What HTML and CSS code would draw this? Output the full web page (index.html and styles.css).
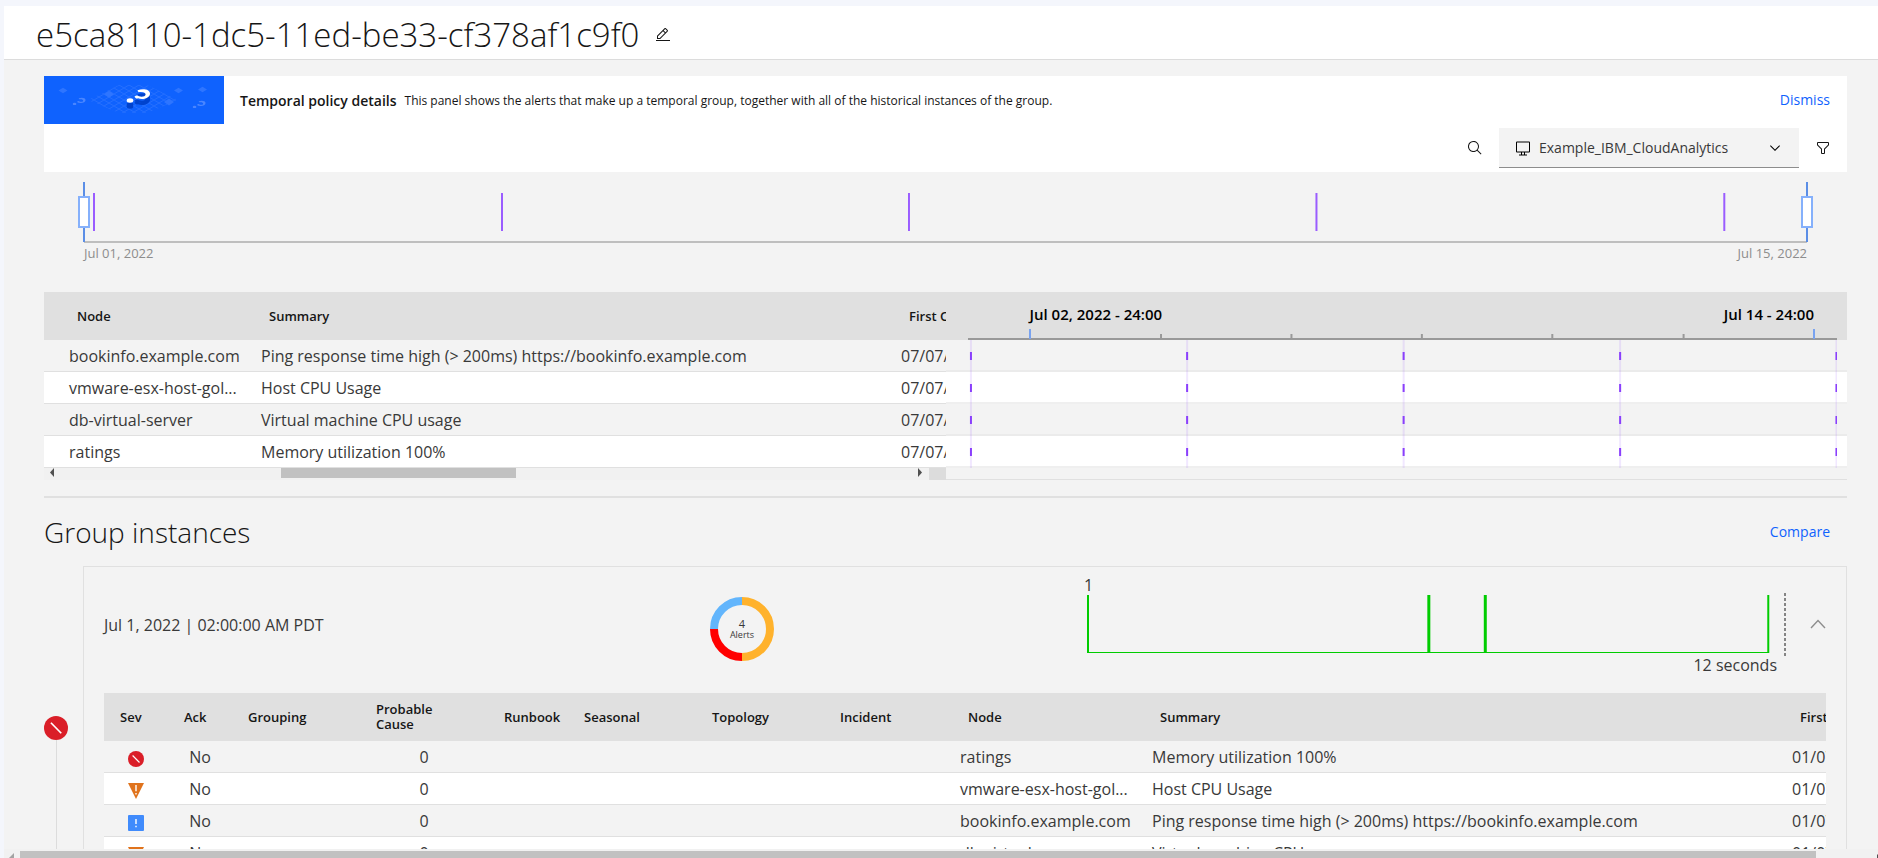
FILE: index.html
```html
<!DOCTYPE html>
<html lang="en">
<head>
<meta charset="utf-8">
<title>Temporal policy details</title>
<link rel="stylesheet" href="styles.css">
</head>
<body>
<svg class="defs" width="0" height="0" aria-hidden="true">
  <symbol id="critical" viewBox="0 0 16 16"><circle cx="8" cy="8" r="8" fill="#da1e28"/><path d="M4.2 4.9l.8-.8 6.9 7-.8.8z" fill="#fff"/></symbol>
  <symbol id="major" viewBox="0 0 16 16"><path d="M0 0h16L8 16z" fill="#e0731c"/><path d="M7.3 2h1.4v6.2H7.3zM7.3 10h1.4v1.5H7.3z" fill="#fff"/></symbol>
  <symbol id="minor" viewBox="0 0 16 16"><rect width="16" height="16" rx="1" fill="#408bfc"/><path d="M7.3 4h1.4v5H7.3zM7.3 10.8h1.4v1.5H7.3z" fill="#fff"/></symbol>
  <symbol id="question" viewBox="0 0 26 20" overflow="visible"><ellipse cx="4" cy="12.5" rx="3.3" ry="2.2"/><path d="M8.5 8.6c1.8-1.6 3.2-1.3 4.5-.3 2.2.9 6.3.6 6.6-1.7C19.800 4.200 16 3.300 12.500 4.300l-1-2C17 .200 23.800 1.300 24 5.500c.2 4.700-7.500 6.700-12 4.800-1 .6-2.500.4-3.500-1.700z"/></symbol>
</svg>

<header class="titlebar">
  <h1>e5ca8110-1dc5-11ed-be33-cf378af1c9f0</h1>
  <button class="icon-button" aria-label="Edit name"><svg width="16" height="16" viewBox="0 0 32 32"><path d="M2 26h28v2H2zM25.400 9c.8-.8.8-2 0-2.800l-3.600-3.600c-.8-.8-2-.8-2.800 0l-15 15V24h6.400l15-15zm-5-5L24 7.600l-3 3L17.400 7l3-3zM6 22v-3.600l10-10 3.600 3.600-10 10H6z"/></svg></button>
</header>

<main class="content">
  <section class="panel">
    <div class="intro">
      <svg class="banner" width="180" height="48" viewBox="0 0 180 48" aria-hidden="true">
        <defs>
          <pattern id="mesh" width="10" height="6" patternUnits="userSpaceOnUse"><path d="M0 0l10 6M10 0L0 6" stroke="#4a86ff" stroke-width=".6" fill="none"/></pattern>
        </defs>
        <rect width="180" height="48" fill="#0f62fe"/>
        <path d="M44 24L75 9h28l31 15-31 13H75z" fill="url(#mesh)" opacity=".6"/>
        <g fill="#2e75ff"><path d="M14.500 14.500l4.500-2.700 4.500 2.700-4.500 2.700zM60 18.300l5-3.500 5 3.500-5 3.500zM130 14.500l4.500-2.700 4.500 2.700-4.500 2.700zM154 13.500l4.500-2.700 4.500 2.700-4.500 2.700zM120 26l5-3.500 5 3.500-5 3.500z"/></g>
        <g fill="#4a86ff"><use href="#question" x="28" y="21" width="15" height="11"/><use href="#question" x="148" y="24" width="15" height="11"/></g>
        <use href="#question" x="82" y="18" width="26" height="20" fill="#0043ce"/>
        <use href="#question" x="82" y="16" width="26" height="20" fill="#0043ce"/>
        <use href="#question" x="82" y="12" width="26" height="20" fill="#fff"/>
      </svg>
      <h2>Temporal policy details</h2>
      <p>This panel shows the alerts that make up a temporal group, together with all of the historical instances of the group.</p>
      <button class="link">Dismiss</button>
    </div>
    <div class="toolbar">
      <button class="icon-button" aria-label="Search"><svg width="16" height="16" viewBox="0 0 32 32"><path d="M29 27.600l-7.600-7.600a11 11 0 1 0-1.400 1.400l7.600 7.600zM4 13a9 9 0 1 1 9 9 9 9 0 0 1-9-9z"/></svg></button>
      <label class="picker">
        <svg width="16" height="16" viewBox="0 0 32 32" aria-hidden="true"><path d="M28 3H4a2 2 0 0 0-2 2v18a2 2 0 0 0 2 2h8v4H8v2h16v-2h-4v-4h8a2 2 0 0 0 2-2V5a2 2 0 0 0-2-2zM18 29h-4v-4h4zm10-6H4V5h24z"/></svg>
        <select aria-label="View"><option>Example_IBM_CloudAnalytics</option></select>
        <svg width="16" height="16" viewBox="0 0 16 16" aria-hidden="true"><path d="M8 11L3 6l.7-.7L8 9.600l4.300-4.300.7.7z"/></svg>
      </label>
      <button class="icon-button" aria-label="Filter"><svg width="16" height="16" viewBox="0 0 32 32"><path d="M18 28h-4a2 2 0 0 1-2-2v-7.600L4.600 11A2 2 0 0 1 4 9.600V6a2 2 0 0 1 2-2h20a2 2 0 0 1 2 2v3.600a2 2 0 0 1-.6 1.400L20 18.400V26a2 2 0 0 1-2 2zM6 6v3.600l8 8V26h4v-8.400l8-8V6z"/></svg></button>
    </div>
  </section>

  <section class="overview">
    <svg width="100%" height="61" aria-label="Group occurrences">
      <rect y="59" width="100%" height="2" fill="#bebebe"/>
      <g stroke="#9a5cff" stroke-width="2">
        <line x1="0.58%" x2="0.58%" y1="11" y2="49"/><line x1="24.260%" x2="24.260%" y1="11" y2="49"/><line x1="47.880%" x2="47.880%" y1="11" y2="49"/><line x1="71.530%" x2="71.530%" y1="11" y2="49"/><line x1="95.200%" x2="95.200%" y1="11" y2="49"/>
      </g>
      <g stroke="#5b8ee6" stroke-width="2"><line x1="0" x2="0" y1="0" y2="60"/><line x1="100%" x2="100%" y1="0" y2="60"/></g>
      <g fill="#fff" stroke="#85b0fb" stroke-width="2">
        <rect x="-5" y="15" width="10" height="30"/>
        <svg x="100%" overflow="visible"><rect x="-5" y="15" width="10" height="30"/></svg>
      </g>
    </svg>
    <div class="range"><span>Jul 01, 2022</span><span>Jul 15, 2022</span></div>
  </section>

  <section class="details">
    <div class="alerts">
      <table class="grid">
        <colgroup><col class="w-edge"><col class="w-node"><col class="w-summary"><col class="w-date"></colgroup>
        <thead><tr><th></th><th>Node</th><th>Summary</th><th>First Occurrence</th></tr></thead>
        <tbody>
          <tr><td></td><td>bookinfo.example.com</td><td>Ping response time high (&gt; 200ms) https://bookinfo.example.com</td><td>07/07/2022</td></tr>
          <tr><td></td><td>vmware-esx-host-gol...</td><td>Host CPU Usage</td><td>07/07/2022</td></tr>
          <tr><td></td><td>db-virtual-server</td><td>Virtual machine CPU usage</td><td>07/07/2022</td></tr>
          <tr><td></td><td>ratings</td><td>Memory utilization 100%</td><td>07/07/2022</td></tr>
        </tbody>
      </table>
      <div class="scroll-x">
        <svg width="12" height="12"><path d="M10 0v9L6 4.500z" fill="#505050"/></svg>
        <div class="track"><div class="thumb"></div></div>
        <svg width="12" height="12"><path d="M3 0v9l4-4.500z" fill="#505050"/></svg>
        <div class="corner"></div>
      </div>
    </div>
    <div class="lanes">
      <div class="lanes-head">
        <div class="lane-labels"><span>Jul 02, 2022 - 24:00</span><span>Jul 14 - 24:00</span></div>
        <svg width="100%" height="12">
          <rect y="10" width="100%" height="2" fill="#999"/>
          <g stroke="#999" stroke-width="2"><line x1="22.200%" x2="22.200%" y1="6" y2="11"/><line x1="37.200%" x2="37.200%" y1="6" y2="11"/><line x1="52.200%" x2="52.200%" y1="6" y2="11"/><line x1="67.200%" x2="67.200%" y1="6" y2="11"/><line x1="82.300%" x2="82.300%" y1="6" y2="11"/></g>
          <g stroke="#79a3f0" stroke-width="2"><line x1="7.130%" x2="7.130%" y1="1" y2="11"/><line x1="97.300%" x2="97.300%" y1="1" y2="11"/></g>
        </svg>
      </div>
      <div class="lanes-body">
        <svg width="100%" height="128">
          <g stroke="#8a3ffc" stroke-width="2" stroke-opacity=".12"><line x1="0.340%" x2="0.340%" y1="0" y2="128"/><line x1="25.200%" x2="25.200%" y1="0" y2="128"/><line x1="50.100%" x2="50.100%" y1="0" y2="128"/><line x1="75%" x2="75%" y1="0" y2="128"/><line x1="99.880%" x2="99.880%" y1="0" y2="128"/></g>
          <g stroke="#8a3ffc" stroke-width="2" stroke-dasharray="8 24"><line x1="0.340%" x2="0.340%" y1="12" y2="128"/><line x1="25.200%" x2="25.200%" y1="12" y2="128"/><line x1="50.100%" x2="50.100%" y1="12" y2="128"/><line x1="75%" x2="75%" y1="12" y2="128"/><line x1="99.880%" x2="99.880%" y1="12" y2="128"/></g>
        </svg>
      </div>
    </div>
  </section>

  <section class="instances">
    <div class="instances-head"><h2>Group instances</h2><button class="link">Compare</button></div>
    <div class="instance">
      <div class="rail"><svg width="24" height="24"><use href="#critical"/></svg></div>
      <article class="card">
        <div class="card-head">
          <span>Jul 1, 2022 | 02:00:00 AM PDT</span>
          <div class="donut">
            <svg width="64" height="64" viewBox="0 0 64 64" fill="none" stroke-width="8" aria-hidden="true">
              <path d="M32 4a28 28 0 0 1 0 56" stroke="#ffb22c"/><path d="M32 60A28 28 0 0 1 4 32" stroke="#f00"/><path d="M4 32A28 28 0 0 1 32 4" stroke="#62b5fc"/>
            </svg>
            <div class="donut-label"><b>4</b><span>Alerts</span></div>
          </div>
          <div class="spark">
            <span>1</span>
            <svg width="100%" height="64" aria-label="Alert timing">
              <rect y="59" width="97.700%" height="1" fill="#0c0"/>
              <g stroke="#0c0"><line x1="0" x2="0" y1="2" y2="60" stroke-width="2"/><line x1="48.900%" x2="48.900%" y1="2" y2="60" stroke-width="3"/><line x1="57%" x2="57%" y1="2" y2="60" stroke-width="3"/><line x1="97.600%" x2="97.600%" y1="2" y2="60" stroke-width="2"/></g>
              <line x1="100%" x2="100%" y1="0" y2="64" stroke="#161616" stroke-dasharray="3 2"/>
            </svg>
            <span class="duration">12 seconds</span>
          </div>
          <button class="icon-button" aria-label="Collapse"><svg width="16" height="16" viewBox="0 0 16 16"><path d="M1 11l7-7.500 7 7.500" fill="none" stroke="#8d8d8d" stroke-width="1.400"/></svg></button>
        </div>
        <div class="alerts">
          <table class="grid">
            <colgroup><col class="w-64"><col class="w-64"><col class="w-128"><col class="w-128"><col class="w-80"><col class="w-128"><col class="w-128"><col class="w-128"><col class="w-node"><col class="w-summary"><col class="w-date"></colgroup>
            <thead><tr><th>Sev</th><th>Ack</th><th>Grouping</th><th>Probable<br>Cause</th><th>Runbook</th><th>Seasonal</th><th>Topology</th><th>Incident</th><th>Node</th><th>Summary</th><th>First Occurrence</th></tr></thead>
            <tbody>
              <tr><td class="mid"><svg width="16" height="16"><use href="#critical"/></svg></td><td class="mid">No</td><td></td><td class="mid">0</td><td></td><td></td><td></td><td></td><td>ratings</td><td>Memory utilization 100%</td><td>01/07/2022</td></tr>
              <tr><td class="mid"><svg width="16" height="16"><use href="#major"/></svg></td><td class="mid">No</td><td></td><td class="mid">0</td><td></td><td></td><td></td><td></td><td>vmware-esx-host-gol...</td><td>Host CPU Usage</td><td>01/07/2022</td></tr>
              <tr><td class="mid"><svg width="16" height="16"><use href="#minor"/></svg></td><td class="mid">No</td><td></td><td class="mid">0</td><td></td><td></td><td></td><td></td><td>bookinfo.example.com</td><td>Ping response time high (&gt; 200ms) https://bookinfo.example.com</td><td>01/07/2022</td></tr>
              <tr><td class="mid"><svg width="16" height="16"><use href="#major"/></svg></td><td class="mid">No</td><td></td><td class="mid">0</td><td></td><td></td><td></td><td></td><td>db-virtual-server</td><td>Virtual machine CPU usage</td><td>01/07/2022</td></tr>
            </tbody>
          </table>
        </div>
      </article>
    </div>
  </section>
</main>

<div class="page-scroll">
  <svg width="16" height="9"><path d="M5 9l5-5v5z" fill="#a3a3a3"/></svg>
  <div class="page-thumb"></div>
  <svg width="62" height="9"><path d="M61 5l1 1v3h-1z" fill="#505050"/></svg>
</div>
</body>
</html>
```
FILE: styles.css
```css
* { box-sizing: border-box; }

body {
  margin: 0;
  height: 100vh;
  padding: 6px 0 0 4px;
  display: flex;
  flex-direction: column;
  overflow: hidden;
  background: #f4f6fc;
  color: #161616;
  font-family: "Open Sans", "Noto Sans", sans-serif;
  font-size: 16px;
}

svg { display: block; flex: none; }
.defs { position: absolute; }
h1, h2, p { margin: 0; }
button { border: 0; padding: 0; background: none; font: inherit; }
.icon-button { display: flex; align-items: center; justify-content: center; }
.icon-button svg { fill: #161616; }
.link { color: #0f62fe; font-size: 14px; line-height: 20px; }

.titlebar {
  flex: none;
  display: flex;
  align-items: center;
  gap: 16px;
  padding: 4px 32px 0;
  background: #fff;
  border-bottom: 1px solid #dcdcdc;
}
.titlebar h1 { font-size: 33px; font-weight: 300; line-height: 49px; }

.content {
  flex: 1;
  min-height: 0;
  overflow: hidden;
  padding: 16px 31px 0 40px;
  background: #f3f3f3;
}

.panel { background: #fff; }
.intro { display: flex; align-items: center; padding-right: 17px; }
.intro h2 { margin-left: 16px; font-size: 14px; font-weight: 600; }
.intro p { margin-left: 8px; font-size: 12px; flex: 1; }
.toolbar { display: flex; justify-content: flex-end; padding: 4px 16px 4px 0; gap: 16px; }
.picker {
  display: flex;
  align-items: center;
  width: 300px;
  height: 40px;
  padding: 0 16px;
  gap: 8px;
  background: #f3f3f3;
  border-bottom: 1px solid #8d8d8d;
}
.picker select {
  flex: 1;
  min-width: 0;
  border: 0;
  padding: 0;
  background: none;
  appearance: none;
  color: #393939;
  font: 14px "Open Sans", sans-serif;
}

.overview { padding: 10px 40px 0; height: 120px; }
.overview svg { overflow: visible; }
.range { display: flex; justify-content: space-between; padding-top: 2px; font-size: 13px; line-height: 16px; color: #8d8d8d; }

.details { display: flex; border-bottom: 2px solid #e0e0e0; padding-bottom: 16px; }
.details > * { flex: 1 1 0; min-width: 0; }
.alerts { overflow: hidden; }

/* Zero width with fixed layout sizes the table to the sum of its columns. */
.grid { width: 0; table-layout: fixed; border-collapse: separate; border-spacing: 0; }
.w-edge { width: 17px; }
.w-64 { width: 64px; }
.w-80 { width: 80px; }
.w-128 { width: 128px; }
.w-node { width: 192px; }
.w-summary { width: 640px; }
.w-date { width: 192px; }
.grid th {
  height: 48px;
  padding: 0 0 0 16px;
  background: #e0e0e0;
  text-align: left;
  font-size: 13px;
  line-height: 15px;
  font-weight: 600;
  white-space: nowrap;
}
.grid td {
  height: 32px;
  padding: 0 8px;
  border-bottom: 1px solid #e0e0e0;
  background: #f3f3f3;
  color: #393939;
  font-size: 16px;
  line-height: 24px;
  white-space: nowrap;
  overflow: hidden;
  text-overflow: ellipsis;
}
.grid th:empty, .grid td:empty { padding: 0; }
.grid tr:nth-child(even) td { background: #fff; }
.grid .mid { text-align: center; }
.mid svg { margin: 4px auto 0; }

.scroll-x { display: flex; height: 12px; background: #f1f1f1; }
.track { flex: 1; padding-left: 25%; }
.thumb { width: 37%; height: 10px; background: #c1c1c1; }
.corner { width: 17px; margin-left: 2px; background: #dcdcdc; }

.lanes { display: flex; flex-direction: column; border-bottom: 1px solid #e0e0e0; }
.lanes-head { height: 48px; padding: 12px 10px 0 22px; background: #e0e0e0; display: flex; flex-direction: column; justify-content: space-between; }
.lane-labels { display: flex; justify-content: space-between; padding: 0 23px 0 62px; font-size: 15px; line-height: 20px; font-weight: 600; color: #000; }
.lanes-body {
  padding: 0 10px 0 22px;
  background: repeating-linear-gradient(#f3f3f3 0 30px, #ebebeb 30px 32px, #fff 32px 62px, #efefef 62px 64px);
}

.instances-head { display: flex; justify-content: space-between; align-items: center; height: 68px; padding-right: 17px; }
.instances-head h2 { font-size: 28px; font-weight: 300; }
.instance { display: grid; grid-template-columns: 24px minmax(0, 1fr); gap: 15px; }
.rail { display: flex; flex-direction: column; align-items: center; padding-top: 150px; }
.rail::after { content: ""; flex: 1; width: 1px; background: #dcdcdc; }
.card { border: 1px solid #e0e0e0; padding: 10px 20px; }
.card-head {
  display: grid;
  grid-template-columns: minmax(0, 606fr) minmax(0, 378fr) minmax(0, 697fr) 41px;
  align-items: center;
  margin-bottom: 20px;
  color: #393939;
}
.donut { display: grid; width: 64px; margin-top: 8px; }
.donut > * { grid-area: 1 / 1; }
.donut-label { display: flex; flex-direction: column; align-items: center; justify-content: center; font-size: 9px; line-height: 10px; }
.donut-label b { font-size: 11px; font-weight: 400; line-height: 12px; }
.spark { display: flex; flex-direction: column; }
.spark svg { overflow: visible; }
.spark span { line-height: 16px; margin-left: -4px; }
.spark .duration { align-self: flex-end; margin-right: 8px; }
.card-head .icon-button { justify-content: flex-end; }

.page-scroll { flex: none; display: flex; height: 9px; background: #f1f1f1; }
.page-thumb { flex: 1; margin-top: 2px; background: #c1c1c1; }
```
